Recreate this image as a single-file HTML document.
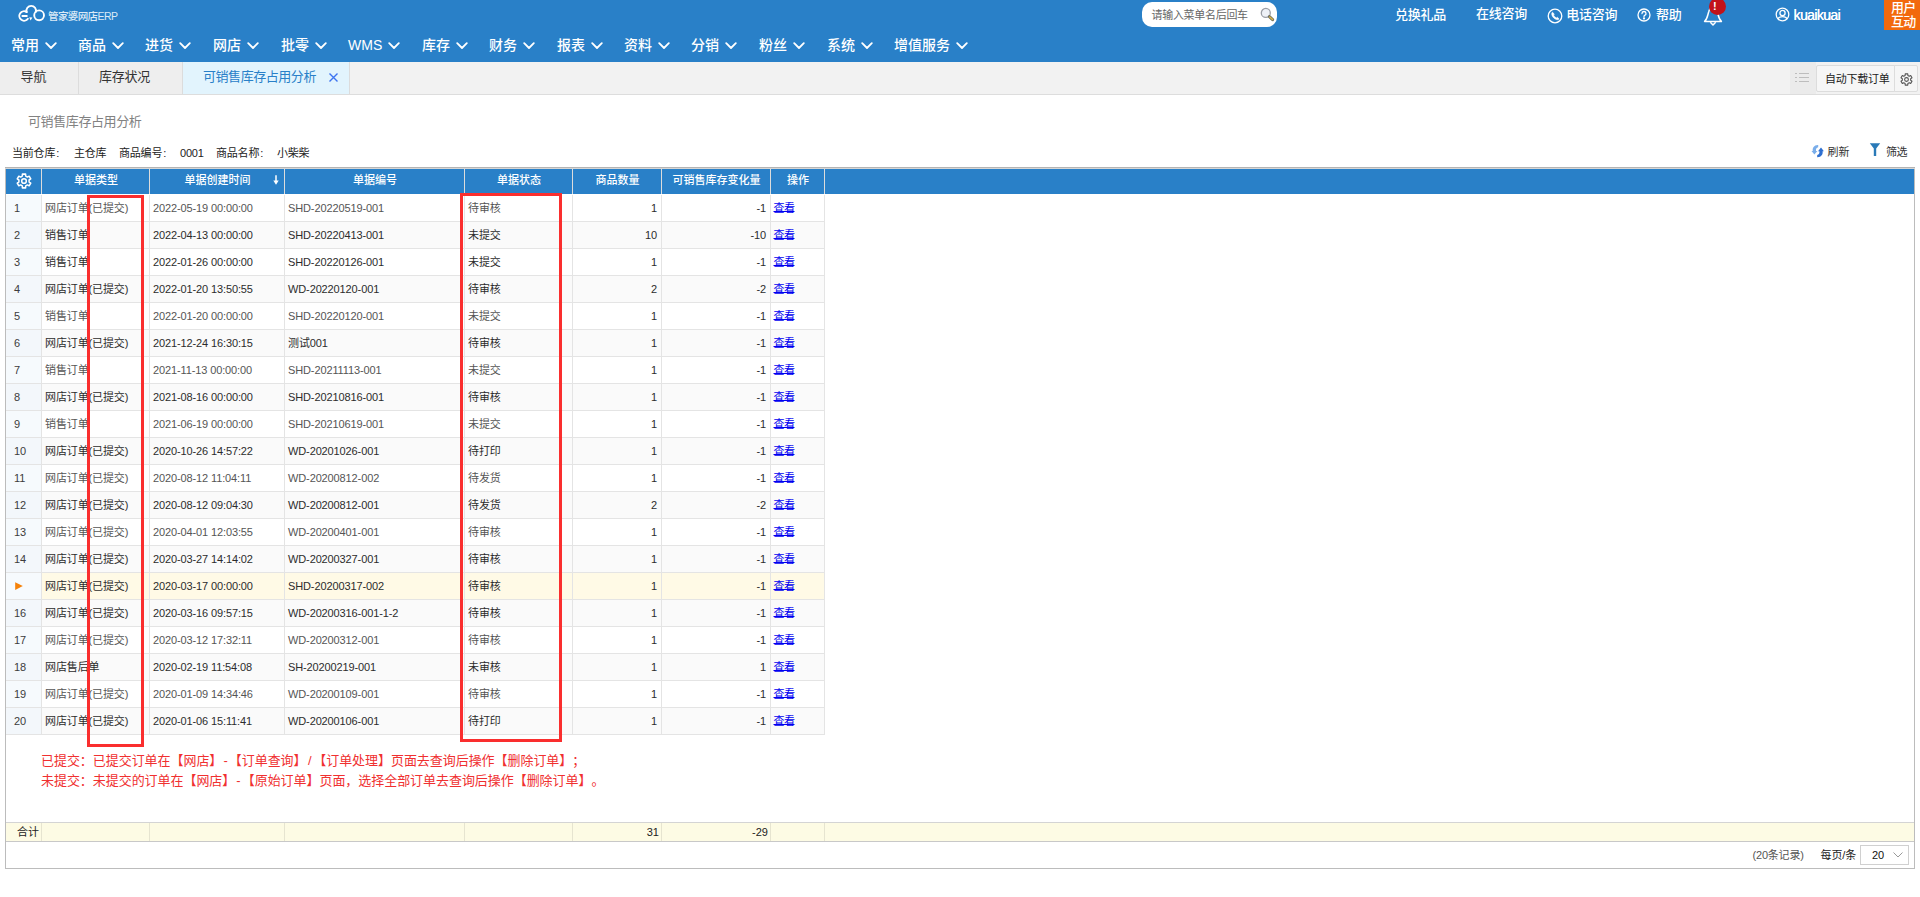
<!DOCTYPE html>
<html lang="zh-CN">
<head>
<meta charset="utf-8">
<title>可销售库存占用分析</title>
<style>
*{box-sizing:border-box;margin:0;padding:0}
html,body{width:1920px;height:897px;overflow:hidden;background:#fff}
body{font-family:"Liberation Sans","Noto Sans CJK SC",sans-serif;font-size:12px;color:#333;position:relative}
.abs{position:absolute;white-space:nowrap}
#top{position:absolute;left:0;top:0;width:1920px;height:62px;background:#2980c8}
.menu{position:absolute;top:34px;height:22px;line-height:22px;color:#fff;font-size:14px;white-space:nowrap}
.menu svg{position:absolute;top:8px;left:100%;margin-left:6px}
.tl{font-weight:500;position:absolute;top:4px;height:22px;line-height:22px;color:#fff;font-size:13px;white-space:nowrap}
#tabs{position:absolute;left:0;top:62px;width:1920px;height:33px;background:#f2f2f2;border-bottom:1px solid #ddd}
.tab{position:absolute;top:0;height:32px;line-height:30px;font-size:13px;color:#333;text-align:center;border-right:1px solid #dcdcdc;background:#eee}
.tab.on{background:#e2f4fd;color:#2980c8}
#grid{position:absolute;left:5px;top:168px;width:1910px;height:701px;border:1px solid #bcbcbc;background:#fff}
#gtop{position:absolute;left:5px;top:167px;width:1910px;height:2px;background:#d6d6d6;border-top:1px solid #b4b4b4}
#ghead{position:absolute;left:0;top:0;width:1908px;height:25px;background:#2980c8}
.hc{padding-left:1px;font-weight:500;position:absolute;top:0;height:25px;line-height:22px;color:#fff;font-size:11px;text-align:center;border-left:1px solid #dcdcdc;white-space:nowrap}
.row{position:absolute;left:0;width:819px;height:27px;border-bottom:1px solid #e4e4e4;background:#fff}
.row.alt{background:#fafafa}
.row.sel{background:#fffae6}
.c{position:absolute;top:0;height:26px;line-height:26px;font-size:11px;white-space:nowrap;border-left:1px solid #e4e4e4;padding:0 3px;color:#333;letter-spacing:-0.120px}
.c.n{border-left:none;background:#f6fafd;padding-left:8px;color:#3c3c3c}
.row.alt .c.n{background:#f3f7fb}
.c.r{text-align:right;padding-right:4px}
.c a{color:#0000f0;text-decoration:underline;text-underline-offset:-0.800px;text-decoration-skip-ink:none;text-decoration-thickness:1px;letter-spacing:-0.500px;position:relative;top:-0.500px;left:-0.500px}
i{font-style:normal}
.abs i{padding-left:1px}
.abs i.sl{padding:0 1.600px}
.abs i.hy{padding:0 1.100px}
body{text-spacing-trim:space-all}
.menu{font-weight:500}
.red{position:absolute;border:3px solid #fa2e2e}

</style>
</head>
<body>
<div id="top">
<svg class="abs" style="left:17px;top:4px" width="30" height="20" viewBox="0 0 30 20" fill="none" stroke="#fff" stroke-width="1.9" stroke-linecap="round"><path d="M9.700 8.100 A4.700 4.700 0 1 0 10.900 14.700"/><path d="M5.400 12 H9.800"/><path d="M9.600 8 A4.800 4.800 0 1 1 18.800 8"/><circle cx="22.100" cy="11.300" r="4.900"/><path d="M12.200 13.200 L13.600 16.600 L15.400 13.600 Z" fill="#fff" stroke="none"/></svg>
<div class="abs" style="left:48px;top:8px;font-size:10.500px;line-height:16px;color:#dbeaf7;letter-spacing:-0.600px;font-weight:500">管家婆网店ERP</div>
<div class="menu" style="left:11px">常用<svg width="12" height="8" viewBox="0 0 12 8"><path d="M1.2 1.2 L6 6 L10.8 1.2" fill="none" stroke="#fff" stroke-width="1.8" stroke-linecap="round" stroke-linejoin="round"/></svg></div>
<div class="menu" style="left:78px">商品<svg width="12" height="8" viewBox="0 0 12 8"><path d="M1.2 1.2 L6 6 L10.8 1.2" fill="none" stroke="#fff" stroke-width="1.8" stroke-linecap="round" stroke-linejoin="round"/></svg></div>
<div class="menu" style="left:145px">进货<svg width="12" height="8" viewBox="0 0 12 8"><path d="M1.2 1.2 L6 6 L10.8 1.2" fill="none" stroke="#fff" stroke-width="1.8" stroke-linecap="round" stroke-linejoin="round"/></svg></div>
<div class="menu" style="left:213px">网店<svg width="12" height="8" viewBox="0 0 12 8"><path d="M1.2 1.2 L6 6 L10.8 1.2" fill="none" stroke="#fff" stroke-width="1.8" stroke-linecap="round" stroke-linejoin="round"/></svg></div>
<div class="menu" style="left:281px">批零<svg width="12" height="8" viewBox="0 0 12 8"><path d="M1.2 1.2 L6 6 L10.8 1.2" fill="none" stroke="#fff" stroke-width="1.8" stroke-linecap="round" stroke-linejoin="round"/></svg></div>
<div class="menu" style="left:348px">WMS<svg width="12" height="8" viewBox="0 0 12 8"><path d="M1.2 1.2 L6 6 L10.8 1.2" fill="none" stroke="#fff" stroke-width="1.8" stroke-linecap="round" stroke-linejoin="round"/></svg></div>
<div class="menu" style="left:422px">库存<svg width="12" height="8" viewBox="0 0 12 8"><path d="M1.2 1.2 L6 6 L10.8 1.2" fill="none" stroke="#fff" stroke-width="1.8" stroke-linecap="round" stroke-linejoin="round"/></svg></div>
<div class="menu" style="left:489px">财务<svg width="12" height="8" viewBox="0 0 12 8"><path d="M1.2 1.2 L6 6 L10.8 1.2" fill="none" stroke="#fff" stroke-width="1.8" stroke-linecap="round" stroke-linejoin="round"/></svg></div>
<div class="menu" style="left:557px">报表<svg width="12" height="8" viewBox="0 0 12 8"><path d="M1.2 1.2 L6 6 L10.8 1.2" fill="none" stroke="#fff" stroke-width="1.8" stroke-linecap="round" stroke-linejoin="round"/></svg></div>
<div class="menu" style="left:624px">资料<svg width="12" height="8" viewBox="0 0 12 8"><path d="M1.2 1.2 L6 6 L10.8 1.2" fill="none" stroke="#fff" stroke-width="1.8" stroke-linecap="round" stroke-linejoin="round"/></svg></div>
<div class="menu" style="left:691px">分销<svg width="12" height="8" viewBox="0 0 12 8"><path d="M1.2 1.2 L6 6 L10.8 1.2" fill="none" stroke="#fff" stroke-width="1.8" stroke-linecap="round" stroke-linejoin="round"/></svg></div>
<div class="menu" style="left:759px">粉丝<svg width="12" height="8" viewBox="0 0 12 8"><path d="M1.2 1.2 L6 6 L10.8 1.2" fill="none" stroke="#fff" stroke-width="1.8" stroke-linecap="round" stroke-linejoin="round"/></svg></div>
<div class="menu" style="left:827px">系统<svg width="12" height="8" viewBox="0 0 12 8"><path d="M1.2 1.2 L6 6 L10.8 1.2" fill="none" stroke="#fff" stroke-width="1.8" stroke-linecap="round" stroke-linejoin="round"/></svg></div>
<div class="menu" style="left:894px">增值服务<svg width="12" height="8" viewBox="0 0 12 8"><path d="M1.2 1.2 L6 6 L10.8 1.2" fill="none" stroke="#fff" stroke-width="1.8" stroke-linecap="round" stroke-linejoin="round"/></svg></div>
<div class="abs" style="left:1142px;top:2px;width:135px;height:25px;background:#fff;border-radius:10px"></div>
<div class="abs" style="left:1151.5px;top:7px;font-size:11px;line-height:16px;color:#666;letter-spacing:-0.3px">请输入菜单名后回车</div>
<svg class="abs" style="left:1259px;top:7px" width="16" height="16" viewBox="0 0 16 16"><circle cx="6.8" cy="5.9" r="4.5" fill="#eef1f7" stroke="#9a9ea6" stroke-width="1.3"/><path d="M10.4 9.6 L13.6 12.6" stroke="#6b6b5a" stroke-width="3" stroke-linecap="round"/><path d="M10.8 10 L13.5 12.5" stroke="#d9b44a" stroke-width="1.6" stroke-linecap="round"/></svg>
<div class="tl" style="left:1395px;top:4px;letter-spacing:-0.25px">兑换礼品</div>
<div class="tl" style="left:1476px;top:3px;letter-spacing:-0.25px">在线咨询</div>
<div class="tl" style="left:1566.3px;top:4px;letter-spacing:-0.25px">电话咨询</div>
<div class="tl" style="left:1656px;top:4px;letter-spacing:-0.25px">帮助</div>
<div class="tl" style="left:1793.500px;top:3.600px;font-size:14px;letter-spacing:-0.620px;text-shadow:0.3px 0 0 #fff;font-weight:400;font-family:'Liberation Sans',sans-serif">kuaikuai</div>
<svg class="abs" style="left:1547px;top:8px" width="16" height="16" viewBox="0 0 16 16" fill="none" stroke="#fff" stroke-width="1.3"><circle cx="8" cy="8" r="6.8"/><path d="M5.4 4.2 C4 5.4 5 8.2 6.6 9.800 C8.200 11.400 10.800 12.400 12 11 L10.400 9.200 L9.300 9.900 C8.400 9.500 7 8.100 6.500 7.100 L7.300 6 Z" fill="#fff" stroke="#fff" stroke-width="0.6" stroke-linejoin="round"/></svg>
<svg class="abs" style="left:1637px;top:8px" width="14" height="14" viewBox="0 0 14 14" fill="none" stroke="#fff" stroke-width="1.3"><circle cx="7" cy="7" r="6"/><path d="M5 5.6 A2 2 0 1 1 7.6 7.4 C7 7.7 7 8 7 8.6" stroke-linecap="round"/><circle cx="7" cy="10.4" r="0.5" fill="#fff"/></svg>
<svg class="abs" style="left:1702px;top:5px" width="22" height="22" viewBox="0 0 22 22" fill="none" stroke="#fff" stroke-width="1.5" stroke-linejoin="round"><path d="M2.600 16.400 C5.500 14 5.600 10 6.800 6.500 C7.500 4 9 2.500 11 2.500 C13 2.500 14.500 4 15.200 6.500 C16.400 10 16.500 14 19.400 16.400 Z"/><path d="M8.300 17.300 L11 20 L13.700 17.300" /></svg>
<div class="abs" style="left:1708.500px;top:-2.500px;width:17.500px;height:17.500px;border-radius:9px;background:#c2121a;color:#fff;font-size:11px;font-weight:bold;line-height:16px;text-align:left;padding-left:4.500px">!</div>
<svg class="abs" style="left:1775px;top:6.500px" width="15" height="15" viewBox="0 0 15 15" fill="none" stroke="#fff" stroke-width="1.3"><circle cx="7.5" cy="7.5" r="6.3"/><circle cx="7.5" cy="6" r="2.600"/><path d="M3 11.900 C4 8.800 11 8.800 12 11.900"/></svg>
<div class="abs" style="left:1884px;top:0;width:36px;height:30px;background:#f2690d;color:#fff;font-size:13px;font-weight:500;line-height:14px;padding:1px 0 0 7px;letter-spacing:-0.800px;white-space:normal">用户<br>互动</div>
</div>
<div id="tabs">
<div class="tab" style="left:0;width:79px;padding-right:11px">导航</div>
<div class="tab" style="left:79px;width:104px;padding-right:12px;letter-spacing:-0.25px">库存状况</div>
<div class="tab on" style="left:183px;width:167px;text-align:left;padding-left:20px;letter-spacing:-0.45px">可销售库存占用分析<svg style="position:absolute;left:145px;top:10px" width="11" height="11" viewBox="0 0 11 11"><path d="M1.5 1.5 L9.5 9.5 M9.5 1.5 L1.5 9.5" stroke="#3d74f0" stroke-width="1.4"/></svg></div>
<div class="abs" style="left:1790px;top:0;width:26px;height:32px;background:#ebebeb"></div>
<svg class="abs" style="left:1795px;top:10px" width="16" height="12" viewBox="0 0 16 12" stroke="#bdbdbd" stroke-width="1"><path d="M0 1.5h2M4 1.5h10M0 5.5h2M4 5.5h10M0 9.5h2M4 9.5h10"/></svg>
<div class="abs" style="left:1816px;top:3px;width:79px;height:27px;background:#f6f6f6;border:1px solid #dcdcdc;font-size:11px;line-height:27px;text-align:left;padding-left:8px;letter-spacing:-0.25px;color:#222;border-radius:2px 0 0 2px">自动下载订单</div>
<div class="abs" style="left:1894px;top:3px;width:24px;height:27px;background:#f6f6f6;border:1px solid #ddd;border-radius:0 2px 2px 0"></div>
<div class="abs" style="left:1899.500px;top:10.500px;width:13px;height:13px;line-height:0"><svg width="13" height="13" viewBox="0 0 24 24" fill="none" stroke="#555" stroke-width="2" stroke-linejoin="round"><path d="M14.54 4.62 L14.38 1.67 L9.62 1.67 L9.46 4.62 L6.88 6.11 L4.25 4.77 L1.86 8.90 L4.34 10.51 L4.34 13.49 L1.86 15.10 L4.25 19.23 L6.88 17.89 L9.46 19.38 L9.62 22.33 L14.38 22.33 L14.54 19.38 L17.12 17.89 L19.75 19.23 L22.14 15.10 L19.66 13.49 L19.66 10.51 L22.14 8.90 L19.75 4.77 L17.12 6.11 Z"/><circle cx="12" cy="12" r="3.5"/></svg></div>
</div>
<div class="abs" style="left:28px;top:112px;font-size:13px;line-height:20px;color:#828282;letter-spacing:-0.400px">可销售库存占用分析</div>
<div class="abs" style="left:12px;top:145.300px;font-size:11px;line-height:16px;color:#222;letter-spacing:-0.200px">当前仓库<i>:</i></div>
<div class="abs" style="left:74px;top:145.300px;font-size:11px;line-height:16px;color:#222;letter-spacing:-0.200px">主仓库</div>
<div class="abs" style="left:119px;top:145.300px;font-size:11px;line-height:16px;color:#222;letter-spacing:-0.200px">商品编号<i>:</i></div>
<div class="abs" style="left:180px;top:145.300px;font-size:11px;line-height:16px;color:#222;letter-spacing:-0.200px">0001</div>
<div class="abs" style="left:216px;top:145.300px;font-size:11px;line-height:16px;color:#222;letter-spacing:-0.200px">商品名称<i>:</i></div>
<div class="abs" style="left:277px;top:145.300px;font-size:11px;line-height:16px;color:#222;letter-spacing:-0.200px">小柴柴</div>
<svg class="abs" style="left:1811px;top:144px" width="14" height="14" viewBox="0 0 14 14" fill="none" stroke-linecap="round"><path d="M7.200 1 C3 0.800 1.300 4 1.800 7 L0.500 7 L3.400 10.600 L6.400 7 L5 7 C4.800 5 5.400 3.600 7.200 3.300 Z" fill="#7aaeea"/><path d="M6.200 13.200 C10.400 13.400 12.100 10.200 11.600 7.200 L12.900 7.200 L10 3.600 L7 7.200 L8.400 7.200 C8.600 9.200 8 10.600 6.200 10.900 Z" fill="#2e6fd0"/></svg>
<div class="abs" style="left:1827.500px;top:143.600px;font-size:11px;line-height:16px;color:#333;letter-spacing:0">刷新</div>
<svg class="abs" style="left:1869px;top:143px" width="12" height="14" viewBox="0 0 12 14"><path d="M0.800 0.200 H11.200 L7.200 5.400 V13 H4.800 V5.400 Z" fill="#2a7ab8"/></svg>
<div class="abs" style="left:1886px;top:143.500px;font-size:11px;line-height:16px;color:#333;letter-spacing:-0.4px">筛选</div>
<div id="grid">
<div id="ghead"></div>
<div class="hc" style="left:0;width:35px;border-left:none"><div style="position:absolute;left:10px;top:3.500px;width:16px;height:16px;line-height:0"><svg width="16" height="16" viewBox="0 0 24 24" fill="none" stroke="#fff" stroke-width="2.3" stroke-linejoin="round"><path d="M14.54 4.62 L14.38 1.67 L9.62 1.67 L9.46 4.62 L6.88 6.11 L4.25 4.77 L1.86 8.90 L4.34 10.51 L4.34 13.49 L1.86 15.10 L4.25 19.23 L6.88 17.89 L9.46 19.38 L9.62 22.33 L14.38 22.33 L14.54 19.38 L17.12 17.89 L19.75 19.23 L22.14 15.10 L19.66 13.49 L19.66 10.51 L22.14 8.90 L19.75 4.77 L17.12 6.11 Z"/><circle cx="12" cy="12" r="3.5"/></svg></div></div>
<div class="hc" style="left:35px;width:108px">单据类型</div>
<div class="hc" style="left:143px;width:135px">单据创建时间<svg style="position:absolute;right:5.500px;top:6px" width="6" height="10" viewBox="0 0 6 10"><path d="M3 0.3 V7" stroke="#fff" stroke-width="1.500"/><path d="M0.300 5.600 L3 9.700 L5.700 5.600 Z" fill="#fff"/></svg></div>
<div class="hc" style="left:278px;width:180px">单据编号</div>
<div class="hc" style="left:458px;width:108px">单据状态</div>
<div class="hc" style="left:566px;width:89px">商品数量</div>
<div class="hc" style="left:655px;width:109px">可销售库存变化量</div>
<div class="hc" style="left:764px;width:54px">操作</div>
<div class="hc" style="left:818px;width:10px"></div>
<div class="row" style="top:26px"><div class="c n" style="left:0;width:35px">1</div><div class="c" style="left:35px;width:108px;color:#555">网店订单(已提交)</div><div class="c" style="left:143px;width:135px;color:#555">2022-05-19 00:00:00</div><div class="c" style="left:278px;width:180px;color:#555">SHD-20220519-001</div><div class="c" style="left:458px;width:108px;color:#555">待审核</div><div class="c r" style="left:566px;width:89px;color:#2c2c2c">1</div><div class="c r" style="left:655px;width:109px;color:#2c2c2c">-1</div><div class="c" style="left:764px;width:54px"><a>查看</a></div><div class="c" style="left:818px;width:1px;padding:0"></div></div>
<div class="row alt" style="top:53px"><div class="c n" style="left:0;width:35px">2</div><div class="c" style="left:35px;width:108px;color:#2c2c2c">销售订单</div><div class="c" style="left:143px;width:135px;color:#2c2c2c">2022-04-13 00:00:00</div><div class="c" style="left:278px;width:180px;color:#2c2c2c">SHD-20220413-001</div><div class="c" style="left:458px;width:108px;color:#2c2c2c">未提交</div><div class="c r" style="left:566px;width:89px;color:#2c2c2c">10</div><div class="c r" style="left:655px;width:109px;color:#2c2c2c">-10</div><div class="c" style="left:764px;width:54px"><a>查看</a></div><div class="c" style="left:818px;width:1px;padding:0"></div></div>
<div class="row" style="top:80px"><div class="c n" style="left:0;width:35px">3</div><div class="c" style="left:35px;width:108px;color:#2c2c2c">销售订单</div><div class="c" style="left:143px;width:135px;color:#2c2c2c">2022-01-26 00:00:00</div><div class="c" style="left:278px;width:180px;color:#2c2c2c">SHD-20220126-001</div><div class="c" style="left:458px;width:108px;color:#2c2c2c">未提交</div><div class="c r" style="left:566px;width:89px;color:#2c2c2c">1</div><div class="c r" style="left:655px;width:109px;color:#2c2c2c">-1</div><div class="c" style="left:764px;width:54px"><a>查看</a></div><div class="c" style="left:818px;width:1px;padding:0"></div></div>
<div class="row alt" style="top:107px"><div class="c n" style="left:0;width:35px">4</div><div class="c" style="left:35px;width:108px;color:#2c2c2c">网店订单(已提交)</div><div class="c" style="left:143px;width:135px;color:#2c2c2c">2022-01-20 13:50:55</div><div class="c" style="left:278px;width:180px;color:#2c2c2c">WD-20220120-001</div><div class="c" style="left:458px;width:108px;color:#2c2c2c">待审核</div><div class="c r" style="left:566px;width:89px;color:#2c2c2c">2</div><div class="c r" style="left:655px;width:109px;color:#2c2c2c">-2</div><div class="c" style="left:764px;width:54px"><a>查看</a></div><div class="c" style="left:818px;width:1px;padding:0"></div></div>
<div class="row" style="top:134px"><div class="c n" style="left:0;width:35px">5</div><div class="c" style="left:35px;width:108px;color:#555">销售订单</div><div class="c" style="left:143px;width:135px;color:#555">2022-01-20 00:00:00</div><div class="c" style="left:278px;width:180px;color:#555">SHD-20220120-001</div><div class="c" style="left:458px;width:108px;color:#555">未提交</div><div class="c r" style="left:566px;width:89px;color:#2c2c2c">1</div><div class="c r" style="left:655px;width:109px;color:#2c2c2c">-1</div><div class="c" style="left:764px;width:54px"><a>查看</a></div><div class="c" style="left:818px;width:1px;padding:0"></div></div>
<div class="row alt" style="top:161px"><div class="c n" style="left:0;width:35px">6</div><div class="c" style="left:35px;width:108px;color:#2c2c2c">网店订单(已提交)</div><div class="c" style="left:143px;width:135px;color:#2c2c2c">2021-12-24 16:30:15</div><div class="c" style="left:278px;width:180px;color:#2c2c2c">测试001</div><div class="c" style="left:458px;width:108px;color:#2c2c2c">待审核</div><div class="c r" style="left:566px;width:89px;color:#2c2c2c">1</div><div class="c r" style="left:655px;width:109px;color:#2c2c2c">-1</div><div class="c" style="left:764px;width:54px"><a>查看</a></div><div class="c" style="left:818px;width:1px;padding:0"></div></div>
<div class="row" style="top:188px"><div class="c n" style="left:0;width:35px">7</div><div class="c" style="left:35px;width:108px;color:#555">销售订单</div><div class="c" style="left:143px;width:135px;color:#555">2021-11-13 00:00:00</div><div class="c" style="left:278px;width:180px;color:#555">SHD-20211113-001</div><div class="c" style="left:458px;width:108px;color:#555">未提交</div><div class="c r" style="left:566px;width:89px;color:#2c2c2c">1</div><div class="c r" style="left:655px;width:109px;color:#2c2c2c">-1</div><div class="c" style="left:764px;width:54px"><a>查看</a></div><div class="c" style="left:818px;width:1px;padding:0"></div></div>
<div class="row alt" style="top:215px"><div class="c n" style="left:0;width:35px">8</div><div class="c" style="left:35px;width:108px;color:#2c2c2c">网店订单(已提交)</div><div class="c" style="left:143px;width:135px;color:#2c2c2c">2021-08-16 00:00:00</div><div class="c" style="left:278px;width:180px;color:#2c2c2c">SHD-20210816-001</div><div class="c" style="left:458px;width:108px;color:#2c2c2c">待审核</div><div class="c r" style="left:566px;width:89px;color:#2c2c2c">1</div><div class="c r" style="left:655px;width:109px;color:#2c2c2c">-1</div><div class="c" style="left:764px;width:54px"><a>查看</a></div><div class="c" style="left:818px;width:1px;padding:0"></div></div>
<div class="row" style="top:242px"><div class="c n" style="left:0;width:35px">9</div><div class="c" style="left:35px;width:108px;color:#555">销售订单</div><div class="c" style="left:143px;width:135px;color:#555">2021-06-19 00:00:00</div><div class="c" style="left:278px;width:180px;color:#555">SHD-20210619-001</div><div class="c" style="left:458px;width:108px;color:#555">未提交</div><div class="c r" style="left:566px;width:89px;color:#2c2c2c">1</div><div class="c r" style="left:655px;width:109px;color:#2c2c2c">-1</div><div class="c" style="left:764px;width:54px"><a>查看</a></div><div class="c" style="left:818px;width:1px;padding:0"></div></div>
<div class="row alt" style="top:269px"><div class="c n" style="left:0;width:35px">10</div><div class="c" style="left:35px;width:108px;color:#2c2c2c">网店订单(已提交)</div><div class="c" style="left:143px;width:135px;color:#2c2c2c">2020-10-26 14:57:22</div><div class="c" style="left:278px;width:180px;color:#2c2c2c">WD-20201026-001</div><div class="c" style="left:458px;width:108px;color:#2c2c2c">待打印</div><div class="c r" style="left:566px;width:89px;color:#2c2c2c">1</div><div class="c r" style="left:655px;width:109px;color:#2c2c2c">-1</div><div class="c" style="left:764px;width:54px"><a>查看</a></div><div class="c" style="left:818px;width:1px;padding:0"></div></div>
<div class="row" style="top:296px"><div class="c n" style="left:0;width:35px">11</div><div class="c" style="left:35px;width:108px;color:#555">网店订单(已提交)</div><div class="c" style="left:143px;width:135px;color:#555">2020-08-12 11:04:11</div><div class="c" style="left:278px;width:180px;color:#555">WD-20200812-002</div><div class="c" style="left:458px;width:108px;color:#555">待发货</div><div class="c r" style="left:566px;width:89px;color:#2c2c2c">1</div><div class="c r" style="left:655px;width:109px;color:#2c2c2c">-1</div><div class="c" style="left:764px;width:54px"><a>查看</a></div><div class="c" style="left:818px;width:1px;padding:0"></div></div>
<div class="row alt" style="top:323px"><div class="c n" style="left:0;width:35px">12</div><div class="c" style="left:35px;width:108px;color:#2c2c2c">网店订单(已提交)</div><div class="c" style="left:143px;width:135px;color:#2c2c2c">2020-08-12 09:04:30</div><div class="c" style="left:278px;width:180px;color:#2c2c2c">WD-20200812-001</div><div class="c" style="left:458px;width:108px;color:#2c2c2c">待发货</div><div class="c r" style="left:566px;width:89px;color:#2c2c2c">2</div><div class="c r" style="left:655px;width:109px;color:#2c2c2c">-2</div><div class="c" style="left:764px;width:54px"><a>查看</a></div><div class="c" style="left:818px;width:1px;padding:0"></div></div>
<div class="row" style="top:350px"><div class="c n" style="left:0;width:35px">13</div><div class="c" style="left:35px;width:108px;color:#555">网店订单(已提交)</div><div class="c" style="left:143px;width:135px;color:#555">2020-04-01 12:03:55</div><div class="c" style="left:278px;width:180px;color:#555">WD-20200401-001</div><div class="c" style="left:458px;width:108px;color:#555">待审核</div><div class="c r" style="left:566px;width:89px;color:#2c2c2c">1</div><div class="c r" style="left:655px;width:109px;color:#2c2c2c">-1</div><div class="c" style="left:764px;width:54px"><a>查看</a></div><div class="c" style="left:818px;width:1px;padding:0"></div></div>
<div class="row alt" style="top:377px"><div class="c n" style="left:0;width:35px">14</div><div class="c" style="left:35px;width:108px;color:#2c2c2c">网店订单(已提交)</div><div class="c" style="left:143px;width:135px;color:#2c2c2c">2020-03-27 14:14:02</div><div class="c" style="left:278px;width:180px;color:#2c2c2c">WD-20200327-001</div><div class="c" style="left:458px;width:108px;color:#2c2c2c">待审核</div><div class="c r" style="left:566px;width:89px;color:#2c2c2c">1</div><div class="c r" style="left:655px;width:109px;color:#2c2c2c">-1</div><div class="c" style="left:764px;width:54px"><a>查看</a></div><div class="c" style="left:818px;width:1px;padding:0"></div></div>
<div class="row sel" style="top:404px"><div class="c n" style="left:0;width:35px"><svg style="position:absolute;left:9px;top:9px" width="8" height="8" viewBox="0 0 8 8"><path d="M0.2 0.3 L7.8 4.1 L0.2 7.900 Z" fill="#f5820a"/></svg></div><div class="c" style="left:35px;width:108px;color:#2c2c2c">网店订单(已提交)</div><div class="c" style="left:143px;width:135px;color:#2c2c2c">2020-03-17 00:00:00</div><div class="c" style="left:278px;width:180px;color:#2c2c2c">SHD-20200317-002</div><div class="c" style="left:458px;width:108px;color:#2c2c2c">待审核</div><div class="c r" style="left:566px;width:89px;color:#2c2c2c">1</div><div class="c r" style="left:655px;width:109px;color:#2c2c2c">-1</div><div class="c" style="left:764px;width:54px"><a>查看</a></div><div class="c" style="left:818px;width:1px;padding:0"></div></div>
<div class="row alt" style="top:431px"><div class="c n" style="left:0;width:35px">16</div><div class="c" style="left:35px;width:108px;color:#2c2c2c">网店订单(已提交)</div><div class="c" style="left:143px;width:135px;color:#2c2c2c">2020-03-16 09:57:15</div><div class="c" style="left:278px;width:180px;color:#2c2c2c">WD-20200316-001-1-2</div><div class="c" style="left:458px;width:108px;color:#2c2c2c">待审核</div><div class="c r" style="left:566px;width:89px;color:#2c2c2c">1</div><div class="c r" style="left:655px;width:109px;color:#2c2c2c">-1</div><div class="c" style="left:764px;width:54px"><a>查看</a></div><div class="c" style="left:818px;width:1px;padding:0"></div></div>
<div class="row" style="top:458px"><div class="c n" style="left:0;width:35px">17</div><div class="c" style="left:35px;width:108px;color:#555">网店订单(已提交)</div><div class="c" style="left:143px;width:135px;color:#555">2020-03-12 17:32:11</div><div class="c" style="left:278px;width:180px;color:#555">WD-20200312-001</div><div class="c" style="left:458px;width:108px;color:#555">待审核</div><div class="c r" style="left:566px;width:89px;color:#2c2c2c">1</div><div class="c r" style="left:655px;width:109px;color:#2c2c2c">-1</div><div class="c" style="left:764px;width:54px"><a>查看</a></div><div class="c" style="left:818px;width:1px;padding:0"></div></div>
<div class="row alt" style="top:485px"><div class="c n" style="left:0;width:35px">18</div><div class="c" style="left:35px;width:108px;color:#2c2c2c">网店售后单</div><div class="c" style="left:143px;width:135px;color:#2c2c2c">2020-02-19 11:54:08</div><div class="c" style="left:278px;width:180px;color:#2c2c2c">SH-20200219-001</div><div class="c" style="left:458px;width:108px;color:#2c2c2c">未审核</div><div class="c r" style="left:566px;width:89px;color:#2c2c2c">1</div><div class="c r" style="left:655px;width:109px;color:#2c2c2c">1</div><div class="c" style="left:764px;width:54px"><a>查看</a></div><div class="c" style="left:818px;width:1px;padding:0"></div></div>
<div class="row" style="top:512px"><div class="c n" style="left:0;width:35px">19</div><div class="c" style="left:35px;width:108px;color:#555">网店订单(已提交)</div><div class="c" style="left:143px;width:135px;color:#555">2020-01-09 14:34:46</div><div class="c" style="left:278px;width:180px;color:#555">WD-20200109-001</div><div class="c" style="left:458px;width:108px;color:#555">待审核</div><div class="c r" style="left:566px;width:89px;color:#2c2c2c">1</div><div class="c r" style="left:655px;width:109px;color:#2c2c2c">-1</div><div class="c" style="left:764px;width:54px"><a>查看</a></div><div class="c" style="left:818px;width:1px;padding:0"></div></div>
<div class="row alt" style="top:539px"><div class="c n" style="left:0;width:35px">20</div><div class="c" style="left:35px;width:108px;color:#2c2c2c">网店订单(已提交)</div><div class="c" style="left:143px;width:135px;color:#2c2c2c">2020-01-06 15:11:41</div><div class="c" style="left:278px;width:180px;color:#2c2c2c">WD-20200106-001</div><div class="c" style="left:458px;width:108px;color:#2c2c2c">待打印</div><div class="c r" style="left:566px;width:89px;color:#2c2c2c">1</div><div class="c r" style="left:655px;width:109px;color:#2c2c2c">-1</div><div class="c" style="left:764px;width:54px"><a>查看</a></div><div class="c" style="left:818px;width:1px;padding:0"></div></div>
<div class="abs" style="left:35px;top:582px;font-size:13px;line-height:20px;color:#f03030;letter-spacing:-0.05px">已提交：已提交订单在【网店】<i class="hy">-</i>【订单查询】<i class="sl">/</i>【订单处理】页面去查询后操作【删除订单】；</div>
<div class="abs" style="left:35px;top:602px;font-size:13px;line-height:20px;color:#f03030;letter-spacing:-0.05px">未提交：未提交的订单在【网店】<i class="hy">-</i>【原始订单】页面，选择全部订单去查询后操作【删除订单】。</div>
<div class="abs" style="left:0;top:653px;width:1908px;height:20px;background:#fdfbe4;border-top:1px solid #d4d4d4;border-bottom:1px solid #c8c8c8"></div>
<div class="abs" style="left:35px;top:654px;width:1px;height:18px;background:#e6e4d0"></div>
<div class="abs" style="left:143px;top:654px;width:1px;height:18px;background:#e6e4d0"></div>
<div class="abs" style="left:278px;top:654px;width:1px;height:18px;background:#e6e4d0"></div>
<div class="abs" style="left:458px;top:654px;width:1px;height:18px;background:#e6e4d0"></div>
<div class="abs" style="left:566px;top:654px;width:1px;height:18px;background:#e6e4d0"></div>
<div class="abs" style="left:655px;top:654px;width:1px;height:18px;background:#e6e4d0"></div>
<div class="abs" style="left:764px;top:654px;width:1px;height:18px;background:#e6e4d0"></div>
<div class="abs" style="left:818px;top:654px;width:1px;height:18px;background:#e6e4d0"></div>
<div class="abs" style="left:11px;top:655px;font-size:11px;line-height:16px;color:#222">合计</div>
<div class="abs" style="left:566px;top:655px;width:89px;text-align:right;padding-right:2px;font-size:11px;line-height:16px;color:#222">31</div>
<div class="abs" style="left:655px;top:655px;width:109px;text-align:right;padding-right:2px;font-size:11px;line-height:16px;color:#222">-29</div>
<div class="abs" style="left:1746.500px;top:678px;font-size:11px;line-height:16px;color:#555;letter-spacing:-0.200px">(20条记录)</div>
<div class="abs" style="left:1814.500px;top:678px;font-size:11px;line-height:16px;color:#222;letter-spacing:-0.100px">每页/条</div>
<div class="abs" style="left:1854px;top:676px;width:49px;height:20px;border:1px solid #d0d0d0;background:#fff;font-size:11px;line-height:18px;padding-left:11px;color:#111">20<svg style="position:absolute;left:32px;top:6px" width="10" height="6" viewBox="0 0 10 6"><path d="M0.5 0.5 L5 5 L9.5 0.5" fill="none" stroke="#999" stroke-width="1"/></svg></div>
</div>
<div id="gtop"></div>
<div class="red" style="left:87px;top:195px;width:57px;height:552px"></div>
<div class="red" style="left:460px;top:193px;width:102px;height:549px"></div>
</body>
</html>
